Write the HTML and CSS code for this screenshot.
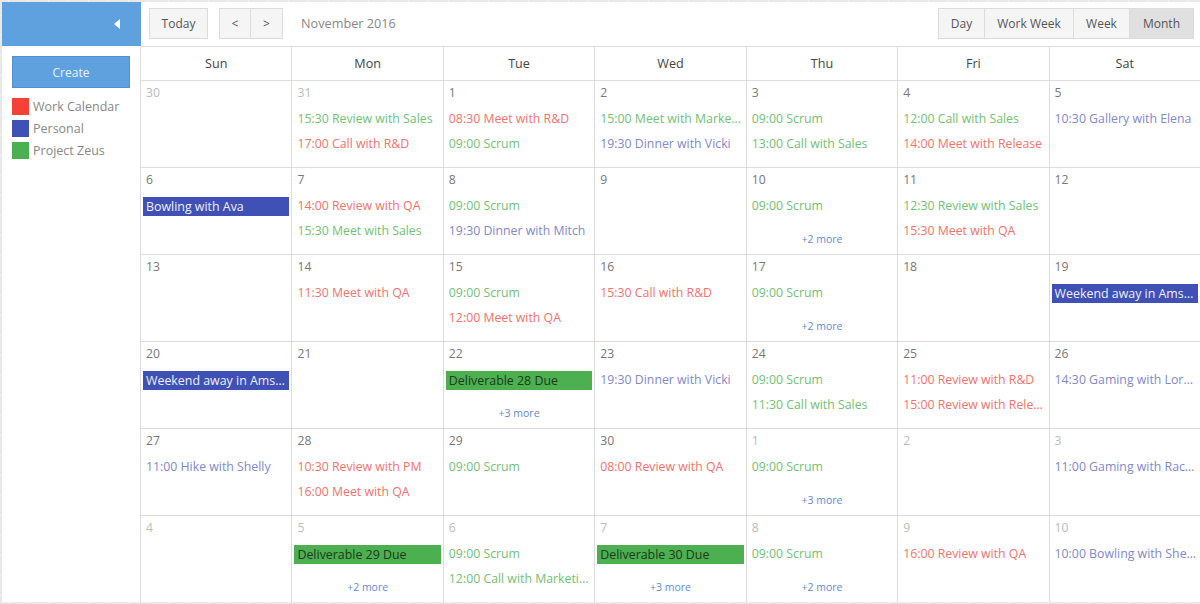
FILE: index.html
```html
<!DOCTYPE html>
<html>
<head>
<meta charset="utf-8">
<title>Scheduler</title>
<link rel="stylesheet" href="styles.css">
</head>
<body>
<div class="app">
  <aside class="sidebar">
    <div class="side-head">
      <svg class="collapse" width="6" height="10" viewBox="0 0 6 10"><polygon points="6,0 6,10 0,5" fill="#fff"/></svg>
    </div>
    <button class="create">Create</button>
    <ul class="legend">
      <li><span class="sq red"></span>Work Calendar</li>
      <li><span class="sq blue"></span>Personal</li>
      <li><span class="sq green"></span>Project Zeus</li>
    </ul>
  </aside>
  <main class="main">
    <div class="toolbar">
      <button class="btn today">Today</button>
      <div class="nav">
        <button class="btn arrow">&lt;</button><button class="btn arrow">&gt;</button>
      </div>
      <span class="title">November 2016</span>
      <div class="views">
        <button class="btn v-day">Day</button><button class="btn v-ww">Work Week</button><button class="btn v-week">Week</button><button class="btn v-month active">Month</button>
      </div>
    </div>
    <div class="grid">
      <div class="hd">Sun</div><div class="hd">Mon</div><div class="hd">Tue</div><div class="hd">Wed</div><div class="hd">Thu</div><div class="hd">Fri</div><div class="hd">Sat</div>

      <div class="cell other"><div class="num">30</div></div>
      <div class="cell other"><div class="num">31</div><div class="ev g">15:30 Review with Sales</div><div class="ev r">17:00 Call with R&amp;D</div></div>
      <div class="cell"><div class="num">1</div><div class="ev r">08:30 Meet with R&amp;D</div><div class="ev g">09:00 Scrum</div></div>
      <div class="cell"><div class="num">2</div><div class="ev g">15:00 Meet with Marketing</div><div class="ev b">19:30 Dinner with Vicki</div></div>
      <div class="cell"><div class="num">3</div><div class="ev g">09:00 Scrum</div><div class="ev g">13:00 Call with Sales</div></div>
      <div class="cell"><div class="num">4</div><div class="ev g">12:00 Call with Sales</div><div class="ev r">14:00 Meet with Release</div></div>
      <div class="cell"><div class="num">5</div><div class="ev b">10:30 Gallery with Elena</div></div>

      <div class="cell"><div class="num">6</div><div class="blk bb">Bowling with Ava</div></div>
      <div class="cell"><div class="num">7</div><div class="ev r">14:00 Review with QA</div><div class="ev g">15:30 Meet with Sales</div></div>
      <div class="cell"><div class="num">8</div><div class="ev g">09:00 Scrum</div><div class="ev b">19:30 Dinner with Mitch</div></div>
      <div class="cell"><div class="num">9</div></div>
      <div class="cell"><div class="num">10</div><div class="ev g">09:00 Scrum</div><div class="more">+2 more</div></div>
      <div class="cell"><div class="num">11</div><div class="ev g">12:30 Review with Sales</div><div class="ev r">15:30 Meet with QA</div></div>
      <div class="cell"><div class="num">12</div></div>

      <div class="cell"><div class="num">13</div></div>
      <div class="cell"><div class="num">14</div><div class="ev r">11:30 Meet with QA</div></div>
      <div class="cell"><div class="num">15</div><div class="ev g">09:00 Scrum</div><div class="ev r">12:00 Meet with QA</div></div>
      <div class="cell"><div class="num">16</div><div class="ev r">15:30 Call with R&amp;D</div></div>
      <div class="cell"><div class="num">17</div><div class="ev g">09:00 Scrum</div><div class="more">+2 more</div></div>
      <div class="cell"><div class="num">18</div></div>
      <div class="cell"><div class="num">19</div><div class="blk bb">Weekend away in Amsterdam</div></div>

      <div class="cell"><div class="num">20</div><div class="blk bb">Weekend away in Amsterdam</div></div>
      <div class="cell"><div class="num">21</div></div>
      <div class="cell"><div class="num">22</div><div class="blk gg">Deliverable 28 Due</div><div class="more">+3 more</div></div>
      <div class="cell"><div class="num">23</div><div class="ev b">19:30 Dinner with Vicki</div></div>
      <div class="cell"><div class="num">24</div><div class="ev g">09:00 Scrum</div><div class="ev g">11:30 Call with Sales</div></div>
      <div class="cell"><div class="num">25</div><div class="ev r">11:00 Review with R&amp;D</div><div class="ev r">15:00 Review with Release</div></div>
      <div class="cell"><div class="num">26</div><div class="ev b">14:30 Gaming with Lorenzo</div></div>

      <div class="cell"><div class="num">27</div><div class="ev b">11:00 Hike with Shelly</div></div>
      <div class="cell"><div class="num">28</div><div class="ev r">10:30 Review with PM</div><div class="ev r">16:00 Meet with QA</div></div>
      <div class="cell"><div class="num">29</div><div class="ev g">09:00 Scrum</div></div>
      <div class="cell"><div class="num">30</div><div class="ev r">08:00 Review with QA</div></div>
      <div class="cell other"><div class="num">1</div><div class="ev g">09:00 Scrum</div><div class="more">+3 more</div></div>
      <div class="cell other"><div class="num">2</div></div>
      <div class="cell other"><div class="num">3</div><div class="ev b">11:00 Gaming with Rachel</div></div>

      <div class="cell other last"><div class="num">4</div></div>
      <div class="cell other last"><div class="num">5</div><div class="blk gg">Deliverable 29 Due</div><div class="more">+2 more</div></div>
      <div class="cell other last"><div class="num">6</div><div class="ev g">09:00 Scrum</div><div class="ev g">12:00 Call with Marketing</div></div>
      <div class="cell other last"><div class="num">7</div><div class="blk gg">Deliverable 30 Due</div><div class="more">+3 more</div></div>
      <div class="cell other last"><div class="num">8</div><div class="ev g">09:00 Scrum</div><div class="more">+2 more</div></div>
      <div class="cell other last"><div class="num">9</div><div class="ev r">16:00 Review with QA</div></div>
      <div class="cell other last"><div class="num">10</div><div class="ev b">10:00 Bowling with Shelly</div></div>
    </div>
  </main>
</div>
</body>
</html>
```
FILE: styles.css
```css
html, body {
  margin: 0;
  padding: 0;
}
body {
  background-color: #e8e8e8;
  background-image:
    linear-gradient(to right, #f3f3f3 1px, transparent 1px),
    linear-gradient(to bottom, #f3f3f3 1px, transparent 1px);
  background-size: 20px 20px;
  background-position: 8px 15px;
  font-family: "Open Sans", "DejaVu Sans", sans-serif;
  height: 604px;
  overflow: hidden;
}
.app {
  margin: 2px 0 0 2px;
  width: 1198px;
  height: 600px;
  display: flex;
  background: #fff;
}
.sidebar {
  width: 139px;
  flex: none;
}
.side-head {
  height: 44px;
  background: #5fa1de;
  display: flex;
  justify-content: flex-end;
  align-items: center;
  padding-right: 21px;
}
.collapse {
  display: block;
}
.create {
  display: block;
  margin: 10px 0 0 10px;
  width: 118px;
  height: 32px;
  box-sizing: border-box;
  background: #5fa1de;
  border: 1px solid #4f91d2;
  color: #e6f0fb;
  font-family: "Open Sans", sans-serif;
  font-size: 12px;
  padding: 0;
  cursor: pointer;
}
.legend {
  list-style: none;
  margin: 10px 0 0 10px;
  padding: 0;
  display: flex;
  flex-direction: column;
  gap: 5px;
}
.legend li {
  display: flex;
  align-items: center;
  gap: 4px;
  height: 17px;
  font-size: 12.5px;
  color: #888;
}
.sq {
  width: 17px;
  height: 17px;
  flex: none;
}
.sq.red { background: #f44336; }
.sq.blue { background: #3f51b5; }
.sq.green { background: #4caf50; }

.main {
  flex: 1;
  display: flex;
  flex-direction: column;
  min-width: 0;
}
.toolbar {
  height: 45px;
  box-sizing: border-box;
  border-bottom: 1px solid #dcdcdc;
  padding: 6px 6px 0 8px;
  display: flex;
  align-items: flex-start;
}
.btn {
  height: 31px;
  box-sizing: border-box;
  border: 1px solid #dcdcdc;
  background: #f5f5f5;
  color: #555;
  font-family: "Open Sans", sans-serif;
  font-size: 12px;
  padding: 0;
  margin: 0;
  text-align: center;
  cursor: pointer;
}
.today { width: 59px; }
.nav {
  display: flex;
  margin-left: 11px;
}
.arrow { width: 32px; }
.arrow + .arrow { border-left: none; }
.title {
  margin-left: 18px;
  line-height: 31px;
  font-size: 12.7px;
  color: #888;
}
.views {
  margin-left: auto;
  display: flex;
}
.views .btn + .btn { border-left: none; }
.v-day { width: 47px; }
.v-ww { width: 89px; }
.v-week { width: 56px; }
.v-month { width: 64px; }
.btn.active { background: #e0e0e0; }

.grid {
  flex: 1;
  display: grid;
  grid-template-columns: repeat(7, 1fr);
  grid-template-rows: 34px repeat(5, 87px) 86px;
  margin-left: -1px;
}
.hd {
  border-left: 1px solid #dcdcdc;
  border-bottom: 1px solid #dcdcdc;
  text-align: center;
  line-height: 33px;
  font-size: 12.6px;
  color: #444;
}
.cell {
  border-left: 1px solid #dcdcdc;
  border-bottom: 1px solid #dcdcdc;
  display: flex;
  flex-direction: column;
  min-width: 0;
  overflow: hidden;
  box-sizing: border-box;
}
.cell.last { border-bottom: none; }
.num {
  height: 22px;
  line-height: 22px;
  margin: 1px 0 2px;
  padding-left: 5px;
  font-size: 12.2px;
  color: #777;
}
.other .num { color: #bbb; }
.ev {
  height: 25px;
  line-height: 25px;
  padding: 0 3px 0 5px;
  font-size: 12.3px;
  white-space: nowrap;
  overflow: hidden;
  text-overflow: ellipsis;
}
.ev.r { color: #f5726a; }
.ev.g { color: #70c273; }
.ev.b { color: #8089cd; }
.blk {
  height: 19px;
  line-height: 19px;
  margin: 4px 2px 2px 2px;
  padding: 0 3px;
  font-size: 12.4px;
  white-space: nowrap;
  overflow: hidden;
  text-overflow: ellipsis;
}
.blk.bb { background: #3f51b5; color: #eef0fa; }
.blk.gg { background: #4caf50; color: #1c3a1d; }
.more {
  margin-top: auto;
  margin-bottom: 8px;
  height: 14px;
  line-height: 14px;
  text-align: center;
  font-size: 10.5px;
  color: #5f8ad9;
}
```
